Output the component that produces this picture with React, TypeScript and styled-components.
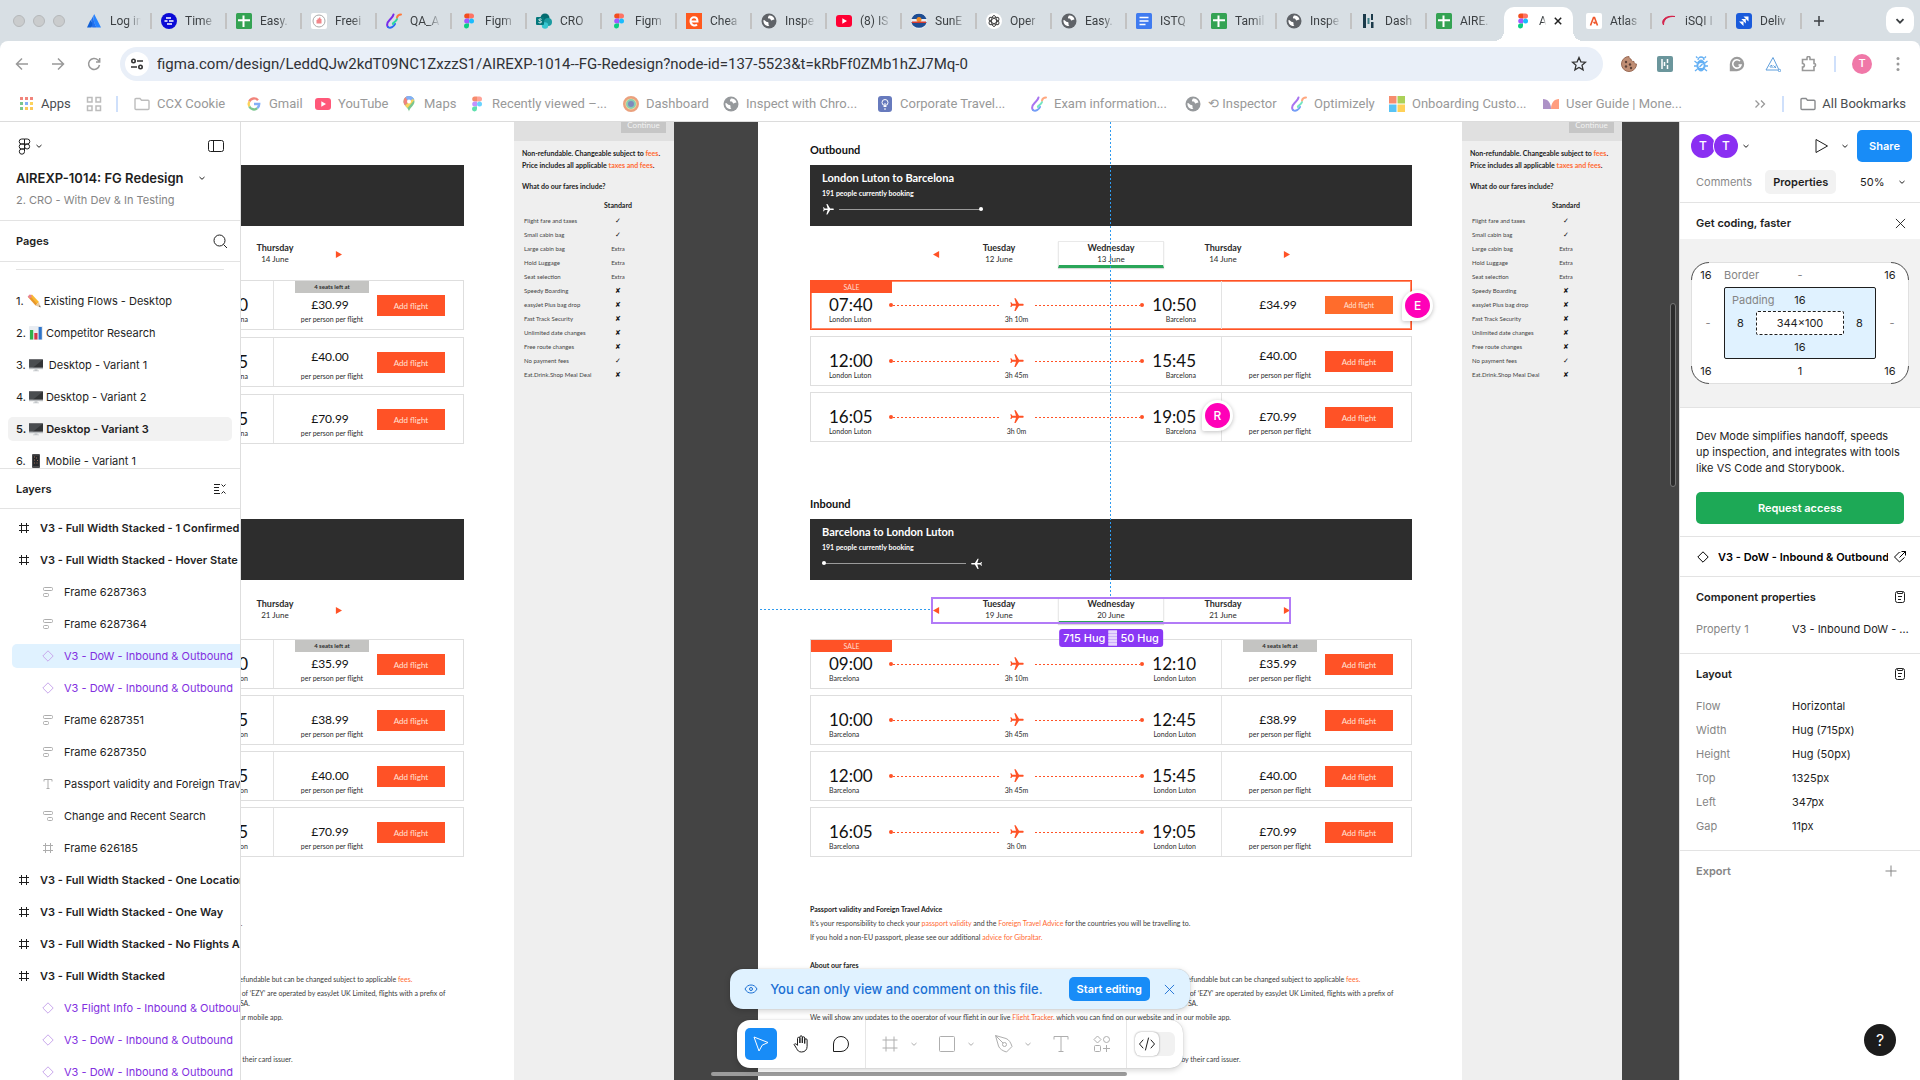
import React from "react";
import styled, { createGlobalStyle, css } from "styled-components";

const UI = `Inter, "Liberation Sans", sans-serif`;
const CHROME = `Roboto, "Liberation Sans", sans-serif`;
const DESIGN = `Lato, "Liberation Sans", sans-serif`;
const ORANGE = "#ff5226";
const LINE = "#e3e3e3";

const GlobalStyle = createGlobalStyle`
  *, *::before, *::after { box-sizing: border-box; }
  body { margin: 0; background: #fff; }
  button, input, select { font: inherit; color: inherit; border: 0; background: none; padding: 0; margin: 0; }
  ul, dl, dd, h1, h2, h3, p { margin: 0; padding: 0; }
  ul { list-style: none; }
  a { color: inherit; text-decoration: none; }
  svg { display: block; flex: none; }
`;

const Window = styled.div`
  display: flex;
  flex-direction: column;
  height: 100vh;
  overflow: hidden;
  font: 400 11px/16px ${UI};
  color: #1e1e1e;
`;

/* ---------- browser chrome ---------- */

const TabStrip = styled.header`
  display: flex;
  flex: none;
  height: 41px;
  padding: 0 6px 0 13px;
  background: #d8dfe4;
  font: 400 12px/16px ${CHROME};
  color: #3c4043;
`;
const Lights = styled.div`
  display: flex;
  align-items: center;
  gap: 8px;
  width: 63px;
`;
const Light = styled.span`
  width: 12px;
  height: 12px;
  border-radius: 50%;
  background: #cacccd;
  border: 1px solid #b5b8ba;
`;
const TabBox = styled.div<{ $active?: boolean; $sep?: boolean }>`
  position: relative;
  display: flex;
  align-items: center;
  width: 75px;
  padding: 0 10px;
  ${(p) =>
    p.$sep &&
    css`
      &::after {
        content: "";
        position: absolute;
        right: -1px;
        top: 13px;
        width: 2px;
        height: 16px;
        background: #c2c2c2;
      }
    `}
  ${(p) =>
    p.$active &&
    css`
      margin: 7px 3px 0;
      width: 69px;
      padding: 0 9px 6px 11px;
      gap: 6px;
      background: #fff;
      border-radius: 10px 10px 0 0;
      &::before {
        content: "";
        position: absolute;
        left: -10px;
        bottom: 0;
        width: 10px;
        height: 10px;
        background: radial-gradient(circle at 0 0, transparent 10px, #fff 10px);
      }
      &::after {
        content: "";
        position: absolute;
        right: -10px;
        bottom: 0;
        width: 10px;
        height: 10px;
        background: radial-gradient(circle at 100% 0, transparent 10px, #fff 10px);
      }
    `}
`;
const TabButton = styled.button`
  display: flex;
  align-items: center;
  gap: 8px;
  flex: 1;
  min-width: 0;
`;
const TabText = styled.span`
  flex: 1;
  min-width: 0;
  overflow: hidden;
  white-space: nowrap;
  text-align: left;
  mask-image: linear-gradient(90deg, #000 55%, transparent 100%);
`;
const IconButton = styled.button<{ $w?: number; $color?: string }>`
  display: grid;
  place-items: center;
  flex: none;
  width: ${(p) => p.$w ?? 24}px;
  height: 24px;
  color: ${(p) => p.$color ?? "inherit"};
`;
const TabEnd = styled.div`
  display: flex;
  flex: 1;
  align-items: center;
  justify-content: space-between;
  padding-left: 6px;
`;
const TabSearch = styled.button`
  display: grid;
  place-items: center;
  width: 28px;
  height: 28px;
  border-radius: 10px;
  background: #fff;
`;
const Toolbar = styled.div`
  display: flex;
  flex: none;
  align-items: center;
  height: 46px;
  padding: 0 8px 0 10px;
  background: #fff;
  color: #999;
  border-radius: 8px 8px 0 0;
  box-shadow: 0 -8px 0 #d8dfe4;
`;
const NavButtons = styled.div`
  display: flex;
  gap: 12px;
  width: 110px;
`;
const Address = styled.form`
  display: flex;
  flex: 1;
  align-items: center;
  height: 34px;
  padding: 0 12px 0 5px;
  border-radius: 17px;
  background: #e9eff8;
  color: #333;
`;
const SiteInfo = styled.button`
  display: grid;
  place-items: center;
  width: 24px;
  height: 24px;
  border-radius: 50%;
  background: #fff;
`;
const AddressInput = styled.input`
  flex: 1;
  min-width: 0;
  padding: 0 8px;
  font: 400 15px/20px ${CHROME};
  color: #303236;
  outline: none;
`;
const Extensions = styled.div`
  display: flex;
  align-items: center;
  gap: 12px;
  padding-left: 14px;
`;
const VBar = styled.span<{ $m?: string }>`
  width: 2px;
  height: 16px;
  margin: ${(p) => p.$m ?? "0"};
  background: #cfe0fb;
`;
const Profile = styled.button`
  width: 20px;
  height: 20px;
  border-radius: 50%;
  background: #f078a8;
  color: #fff;
  font: 500 11px/20px ${CHROME};
  text-align: center;
`;
const Bookmarks = styled.nav`
  display: flex;
  flex: none;
  align-items: center;
  height: 35px;
  padding: 0 14px 0 19px;
  border-bottom: 1px solid #dcdcdc;
  font: 400 13px/16px ${CHROME};
  color: #999;
`;
const Bookmark = styled.a<{ $w?: number; $dark?: boolean }>`
  display: flex;
  align-items: center;
  gap: ${(p) => (p.$dark ? 6 : 7)}px;
  width: ${(p) => (p.$w ? p.$w + "px" : "auto")};
  flex: none;
  white-space: nowrap;
  color: ${(p) => (p.$dark ? "#4a4d51" : "inherit")};
  svg { opacity: 0.65; }
`;
const Spacer = styled.span`
  flex: 1;
`;

/* ---------- figma shell ---------- */

const Shell = styled.div`
  display: flex;
  flex: 1;
  min-height: 0;
`;
const Side = styled.aside<{ $left?: boolean }>`
  display: flex;
  flex-direction: column;
  flex: none;
  width: 241px;
  background: #fff;
  overflow: hidden;
  position: relative;
  border-${(p) => (p.$left ? "right" : "left")}: 1px solid #dedede;
`;
const FileHead = styled.div`
  flex: none;
  padding: 12px 16px;
  border-bottom: 1px solid ${LINE};
`;
const Row = styled.div<{ $gap?: number; $between?: boolean }>`
  display: flex;
  align-items: center;
  gap: ${(p) => p.$gap ?? 0}px;
  justify-content: ${(p) => (p.$between ? "space-between" : "flex-start")};
`;
const LogoButton = styled.button`
  display: flex;
  align-items: center;
  gap: 2px;
  height: 24px;
`;
const FileName = styled.button`
  display: flex;
  align-items: center;
  gap: 14px;
  margin-top: 10px;
  font: 600 13px/20px ${UI};
`;
const Project = styled.p`
  margin-top: 4px;
  color: #858585;
`;
const SectionHead = styled.div<{ $h: number }>`
  display: flex;
  flex: none;
  align-items: center;
  justify-content: space-between;
  height: ${(p) => p.$h}px;
  padding: 0 8px 0 16px;
  border-bottom: 1px solid ${LINE};
  font-weight: 600;
`;
const PageList = styled.ul`
  display: flex;
  flex-direction: column;
  gap: 8px;
  flex: none;
  height: 207px;
  padding: 7px 8px 0;
  overflow: hidden;
  border-bottom: 1px solid ${LINE};
`;
const PageRule = styled.li`
  flex: none;
  height: 1px;
  margin: 0 8px 11px;
  background: ${LINE};
`;
const PageItem = styled.button<{ $on?: boolean }>`
  display: flex;
  align-items: center;
  gap: 3px;
  width: 100%;
  height: 24px;
  padding: 0 8px;
  border-radius: 5px;
  white-space: pre;
  background: ${(p) => (p.$on ? "#f2f2f2" : "none")};
  font-weight: ${(p) => (p.$on ? 600 : 400)};
`;
const LayerList = styled.ul`
  display: flex;
  flex-direction: column;
  gap: 8px;
  flex: 1;
  min-height: 0;
  overflow: hidden;
  padding: 7px 0 0 12px;
`;
const Layer = styled.button<{ $nested?: boolean; $component?: boolean; $on?: boolean }>`
  display: flex;
  align-items: center;
  gap: 10px;
  width: 100%;
  height: 24px;
  padding-left: ${(p) => (p.$nested ? 30 : 6)}px;
  border-radius: 5px 0 0 5px;
  white-space: nowrap;
  overflow: hidden;
  font-weight: ${(p) => (p.$nested ? 400 : 600)};
  color: ${(p) => (p.$component ? "#8230df" : "#1e1e1e")};
  background: ${(p) => (p.$on ? "#e0f2ff" : "none")};
  svg { color: ${(p) => (p.$component ? "#c9a8ec" : p.$nested ? "#adadad" : "#1e1e1e")}; }
`;

/* ---------- canvas ---------- */

const Canvas = styled.main`
  position: relative;
  display: flex;
  gap: 84px;
  flex: 1;
  min-width: 0;
  overflow: hidden;
  background: #444;
`;
const Board = styled.article`
  position: relative;
  display: flex;
  flex: none;
  width: 864px;
  background: #fff;
  font-family: ${DESIGN};
  color: #2b2b2b;
`;
const Journey = styled.div`
  flex: 1;
  padding: 20px 50px 0 52px;
`;
const Leg = styled.section`
  min-height: 354px;
`;
const LegTitle = styled.h2`
  font: 700 11px/16px ${DESIGN};
  color: #111;
`;
const Banner = styled.div`
  height: 61px;
  margin-top: 7px;
  padding: 6px 12px;
  background: #2d2d2d;
  color: #fff;
`;
const BannerTitle = styled.h3`
  font: 700 11px/14px ${DESIGN};
`;
const BannerNote = styled.p`
  margin-top: 3px;
  font: 700 7px/10px ${DESIGN};
`;
const Progress = styled.div<{ $back?: boolean }>`
  display: flex;
  flex-direction: ${(p) => (p.$back ? "row-reverse" : "row")};
  align-items: center;
  width: 161px;
  height: 10px;
  margin-top: 6px;
  gap: 4px;
  svg { transform: rotate(${(p) => (p.$back ? -90 : 90)}deg); }
`;
const ProgressLine = styled.span<{ $back?: boolean }>`
  display: flex;
  align-items: center;
  justify-content: ${(p) => (p.$back ? "flex-start" : "flex-end")};
  flex: 1;
  height: 1px;
  background: #9a9a9a;
`;
const Dot = styled.span<{ $c: string }>`
  flex: none;
  width: 4px;
  height: 4px;
  border-radius: 50%;
  background: ${(p) => p.$c};
`;
const Week = styled.div<{ $late?: boolean }>`
  position: relative;
  display: flex;
  align-items: center;
  gap: 6px;
  width: 358px;
  height: 27px;
  margin: ${(p) => (p.$late ? "17px auto 15px" : "15px auto 12px")};
`;
const Arrow = styled.button<{ $next?: boolean }>`
  width: 8px;
  display: flex;
  justify-content: center;
  color: ${ORANGE};
  svg { transform: ${(p) => (p.$next ? "none" : "scaleX(-1)")}; }
`;
const Day = styled.button<{ $on?: boolean }>`
  width: 106px;
  height: 27px;
  border: 1px solid ${(p) => (p.$on ? "#e9e9e9" : "transparent")};
  border-bottom: 3px solid ${(p) => (p.$on ? "#2aa659" : "transparent")};
  box-shadow: ${(p) => (p.$on ? "0 1px 1px rgba(0,0,0,.15)" : "none")};
  font: 400 8px/11px ${DESIGN};
  text-align: center;
`;
const DayName = styled.strong`
  display: block;
  font: 700 9px/12px ${DESIGN};
`;
const Selection = styled.span`
  position: absolute;
  inset: 0 -1px;
  border: 2px solid #b27bf7;
  pointer-events: none;
`;
const SizeBadge = styled.span`
  position: absolute;
  top: 32px;
  left: 50%;
  z-index: 2;
  display: flex;
  align-items: center;
  gap: 3px;
  height: 18px;
  padding: 0 4px;
  transform: translateX(-50%);
  border-radius: 3px;
  background: #8a38f5;
  color: #fff;
  font: 500 11px/18px ${UI};
  white-space: nowrap;
`;
const Cards = styled.ul<{ $gap: number }>`
  display: flex;
  flex-direction: column;
  gap: ${(p) => p.$gap}px;
`;
const Card = styled.li<{ $hot?: boolean }>`
  display: flex;
  height: 50px;
  border: 1px solid #dedede;
  ${(p) => p.$hot && css`
    border-color: ${ORANGE};
    box-shadow: inset 0 0 0 1px #ff8a66;
  `}
`;
const Flight = styled.div`
  flex: 1;
  border-right: 1px solid #e3e3e3;
`;
const Slot = styled.div<{ $h: number }>`
  height: ${(p) => p.$h}px;
`;
const Tag = styled.span<{ $sale?: boolean }>`
  display: block;
  width: ${(p) => (p.$sale ? 81 : 74)}px;
  height: 12px;
  background: ${(p) => (p.$sale ? ORANGE : "#c4c4c2")};
  color: ${(p) => (p.$sale ? "#ffd9cc" : "#2b2b2b")};
  font: ${(p) => (p.$sale ? 400 : 700)} ${(p) => (p.$sale ? 7 : 6)}px/12px ${DESIGN};
  text-align: center;
`;
const Times = styled.div`
  display: flex;
  padding: 0 25px 0 18px;
`;
const Stop = styled.div<{ $end?: boolean }>`
  width: ${(p) => (p.$end ? 52 : 60)}px;
  text-align: ${(p) => (p.$end ? "right" : "left")};
`;
const Clock = styled.div`
  font: 400 17px/20px ${DESIGN};
  color: #111;
`;
const Small = styled.div<{ $lh?: number }>`
  font: 400 7px/${(p) => p.$lh ?? 8}px ${DESIGN};
  white-space: nowrap;
`;
const Route = styled.div`
  flex: 1;
  text-align: center;
`;
const RouteLine = styled.div`
  display: flex;
  align-items: center;
  height: 20px;
  color: ${ORANGE};
  svg { margin: 0 10px; transform: rotate(90deg); }
`;
const Dashes = styled.span`
  flex: 1;
  height: 1px;
  background: repeating-linear-gradient(90deg, ${ORANGE} 0 2px, transparent 2px 4px);
`;
const Fare = styled.div`
  display: flex;
  width: 189px;
  padding: 0 18px 0 17px;
`;
const FareText = styled.div`
  width: 82px;
  display: flex;
  flex-direction: column;
  align-items: center;
`;
const Price = styled.div`
  font: 400 12px/20px ${DESIGN};
  color: #111;
  padding-right: 4px;
`;
const Add = styled.button<{ $soft?: boolean }>`
  width: 68px;
  height: ${(p) => (p.$soft ? 18 : 21)}px;
  margin: ${(p) => (p.$soft ? 15 : 14)}px 0 0 auto;
  background: ${(p) => (p.$soft ? "#ff6c2c" : ORANGE)};
  color: #ffe3d8;
  font: 400 ${(p) => (p.$soft ? 7 : 8)}px/16px ${DESIGN};
`;
const Notes = styled.div`
  padding-top: 47px;
  white-space: nowrap;
  font: 400 7px/10px ${DESIGN};
  color: #3b3b3b;
  p { margin-bottom: 4px; }
`;
const NoteTitle = styled.h3<{ $top?: number }>`
  margin: ${(p) => p.$top ?? 0}px 0 4px;
  font: 700 7px/10px ${DESIGN};
  color: #222;
`;
const Link = styled.a`
  color: #ff6a33;
`;
const Basket = styled.aside`
  flex: none;
  width: 160px;
  background: #efefef;
`;
const BasketHead = styled.div`
  display: flex;
  justify-content: flex-end;
  align-items: flex-end;
  height: 19px;
  padding: 0 8px 8px 0;
  background: #e0e0e0;
`;
const Continue = styled.button`
  flex: none;
  width: 45px;
  height: 16px;
  background: #c6c6c6;
  color: #f3f3f3;
  font: 400 8px/16px ${DESIGN};
`;
const BasketBody = styled.div`
  padding: 6px 8px;
  font: 700 7px/12px ${DESIGN};
  color: #222;
  white-space: nowrap;
`;
const Question = styled.h3`
  margin-top: 9px;
  font: 700 7px/13px ${DESIGN};
`;
const Fares = styled.table`
  width: 116px;
  margin-top: 5px;
  border-collapse: collapse;
  font: 400 6px/14px ${DESIGN};
  color: #444;
  th { padding: 0 0 2px; font: 700 7px/14px ${DESIGN}; color: #222; }
  td { padding: 0 0 0 2px; height: 14px; }
  td + td { width: 40px; padding: 0; text-align: center; }
`;
const Mark = styled.span`
  font: 700 7px/12px "DejaVu Sans", sans-serif;
  color: #111;
`;
/* Frame scrolled under the left sidebar: only its right-hand part is on screen. */
const Crop = styled.div`
  display: flex;
  justify-content: flex-end;
  flex: none;
  width: 433px;
  overflow: hidden;
  ${LegTitle}, ${BannerTitle}, ${BannerNote}, ${Progress}, ${NoteTitle}, ${Route}, ${Stop}:first-child,
  ${Flight} ${Tag}, ${Day}:not(:nth-child(4)), ${Arrow}:first-child {
    visibility: hidden;
  }
`;
const GuideV = styled.span`
  position: absolute;
  top: 0;
  left: 352px;
  width: 1px;
  height: 475px;
  background: repeating-linear-gradient(#2f9bee 0 2px, transparent 2px 4px);
`;
const GuideH = styled.span`
  position: absolute;
  top: 487px;
  left: 2px;
  width: 171px;
  height: 1px;
  background: repeating-linear-gradient(90deg, #2f9bee 0 2px, transparent 2px 4px);
`;
const Pin = styled.button<{ $x: number; $y: number }>`
  position: absolute;
  left: ${(p) => p.$x}px;
  top: ${(p) => p.$y}px;
  width: 31px;
  height: 31px;
  padding: 3px;
  border-radius: 16px 16px 16px 2px;
  background: #fff;
  box-shadow: 0 1px 4px rgba(0, 0, 0, 0.25);
`;
const PinFace = styled.span`
  display: block;
  border-radius: 50%;
  background: #ff00b8;
  color: #fff;
  font: 500 12px/25px ${UI};
  text-align: center;
`;
const ScrollV = styled.span`
  position: absolute;
  right: 3px;
  top: 181px;
  width: 6px;
  height: 184px;
  border-radius: 3px;
  background: #2c2c2c;
  border: 1px solid #777;
`;
const ScrollH = styled.span`
  position: absolute;
  left: 470px;
  bottom: 4px;
  width: 416px;
  height: 4px;
  border-radius: 2px;
  background: #9c9c9c;
`;
const Dock = styled.div`
  position: absolute;
  left: 0;
  right: 0;
  bottom: 12px;
  display: flex;
  flex-direction: column;
  align-items: center;
  gap: 11px;
`;
const shadow = `0 0 1px rgba(0,0,0,.3), 0 2px 6px rgba(0,0,0,.18)`;
const Notice = styled.div`
  display: flex;
  align-items: center;
  height: 40px;
  padding: 0 8px 0 14px;
  border-radius: 13px;
  background: #e0f2ff;
  box-shadow: ${shadow};
  color: #1a6fd4;
  font: 500 13px/24px ${UI};
`;
const NoticeText = styled.span`
  margin: 0 26px 0 12px;
`;
const Primary = styled.button`
  height: 24px;
  padding: 0 8px;
  margin-right: 8px;
  border-radius: 5px;
  background: #188cf7;
  color: #fff;
  font: 600 11px/24px ${UI};
`;
const Tools = styled.div`
  display: flex;
  align-items: center;
  height: 48px;
  border-radius: 13px;
  background: #fff;
  box-shadow: ${shadow};
`;
const ToolGroup = styled.div<{ $gap?: number; $dim?: boolean }>`
  display: flex;
  align-items: center;
  height: 48px;
  gap: ${(p) => p.$gap ?? 0}px;
  padding: 0 8px;
  color: ${(p) => (p.$dim ? "#aeaeae" : "#1e1e1e")};
  & + & { border-left: 1px solid #e6e6e6; }
`;
const ToolPair = styled.div`
  display: flex;
`;
const Tool = styled.button<{ $on?: boolean; $w?: number }>`
  display: grid;
  place-items: center;
  width: ${(p) => p.$w ?? 32}px;
  height: 32px;
  border-radius: 5px;
  background: ${(p) => (p.$on ? "#188cf7" : "none")};
  color: ${(p) => (p.$on ? "#fff" : "inherit")};
`;
const DevSwitch = styled.button`
  display: flex;
  width: 40px;
  height: 24px;
  border-radius: 6px;
  background: #f1f1f1;
`;
const DevKnob = styled.span`
  display: grid;
  place-items: center;
  width: 24px;
  height: 24px;
  border-radius: 6px;
  background: #fff;
  box-shadow: 0 0 2px rgba(0, 0, 0, 0.45);
`;

/* ---------- right panel ---------- */

const Top = styled.div`
  display: flex;
  align-items: center;
  height: 48px;
  padding: 0 8px 0 11px;
`;
const Face = styled.span<{ $over?: boolean }>`
  width: 24px;
  height: 24px;
  margin-left: ${(p) => (p.$over ? -1 : 0)}px;
  border-radius: 50%;
  background: #8a2ff2;
  box-shadow: 0 0 0 1px #fff;
  color: #fff;
  font: 500 12px/24px ${UI};
  text-align: center;
`;
const Share = styled.button`
  width: 55px;
  height: 32px;
  border-radius: 5px;
  background: #188cf7;
  color: #fff;
  font: 600 11px/32px ${UI};
`;
const Tabs = styled.div`
  display: flex;
  align-items: center;
  padding: 0 10px 8px 8px;
  border-bottom: 1px solid ${LINE};
`;
const PanelTab = styled.button<{ $on?: boolean }>`
  height: 24px;
  padding: 0 8px;
  margin-right: 5px;
  border-radius: 5px;
  color: ${(p) => (p.$on ? "#1e1e1e" : "#8a8a8a")};
  background: ${(p) => (p.$on ? "#f2f2f2" : "none")};
  font-weight: ${(p) => (p.$on ? 600 : 400)};
`;
const ZoomSelect = styled.select`
  width: 34px;
  margin-left: auto;
  appearance: none;
  outline: none;
`;
const Promo = styled.div`
  display: flex;
  align-items: center;
  justify-content: space-between;
  height: 36px;
  padding: 4px 8px 0 16px;
  font-weight: 600;
`;
const Stage = styled.div`
  padding: 23px 11px;
  background: #f2f2f2;
  border-bottom: 1px solid ${LINE};
`;
const BoxModel = styled.div`
  position: relative;
  display: grid;
  grid-template-columns: 32px 1fr 32px;
  grid-template-rows: 24px 72px 24px;
  place-items: center;
  border: 1px solid #e0e0e0;
  border-radius: 18px;
  background: #fff;
`;
const Corners = styled.svg`
  position: absolute;
  inset: -1px;
`;
const Trio = styled.div`
  display: grid;
  grid-template-columns: 1fr auto 1fr;
  width: 100%;
`;
const Corner = styled.span`
  padding-right: 4px;
`;
const Muted = styled.span`
  color: #858585;
`;
const PadBox = styled.div`
  display: grid;
  grid-template-columns: 31px 1fr 31px;
  grid-template-rows: 23px 24px 23px;
  place-items: center;
  width: 100%;
  height: 72px;
  border: 1px solid #1e1e1e;
  border-radius: 2px;
  background: #e0f2ff;
`;
const PadTop = styled.div`
  grid-column: 1 / -1;
  display: grid;
  grid-template-columns: 1fr auto 1fr;
  width: 100%;
  padding: 0 7px;
`;
const PadBottom = styled.div`
  grid-column: 1 / -1;
`;
const Core = styled.div`
  display: grid;
  place-items: center;
  width: 100%;
  height: 24px;
  border: 1px dashed #1e1e1e;
  border-radius: 2px;
  background: #fff;
`;
const Pitch = styled.div`
  padding: 20px 16px 12px;
  border-bottom: 1px solid ${LINE};
`;
const Request = styled.button`
  width: 100%;
  height: 32px;
  margin-top: 16px;
  border-radius: 5px;
  background: #1da956;
  color: #fff;
  font-weight: 600;
`;
const NodeRow = styled.div`
  display: flex;
  align-items: center;
  height: 40px;
  padding: 0 8px 0 17px;
  border-bottom: 1px solid ${LINE};
  font-weight: 600;
  white-space: nowrap;
  color: #000;
`;
const NodeName = styled.span`
  flex: 1;
  min-width: 0;
  margin-left: 9px;
  overflow: hidden;
`;
const Props = styled.section`
  padding-bottom: 12px;
  border-bottom: 1px solid ${LINE};
`;
const PropsHead = styled.h2<{ $dim?: boolean }>`
  display: flex;
  align-items: center;
  justify-content: space-between;
  height: 40px;
  padding: 0 ${(p) => (p.$dim ? 17 : 8)}px 0 16px;
  font: 600 11px/16px ${UI};
  color: ${(p) => (p.$dim ? "#858585" : "#1e1e1e")};
`;
const Prop = styled.div`
  display: grid;
  grid-template-columns: 96px 1fr;
  align-items: center;
  height: 24px;
  padding: 0 11px 0 16px;
  white-space: nowrap;
  dt { color: #858585; }
  dd { overflow: hidden; text-overflow: ellipsis; }
`;
const Help = styled.button`
  position: absolute;
  right: 24px;
  bottom: 24px;
  width: 32px;
  height: 32px;
  border-radius: 50%;
  background: #1c1c1c;
  color: #fff;
  font: 400 16px/32px ${UI};
`;

/* ---------- drawings ---------- */

type S = { s?: number };
const Svg = ({ s = 16, vb = 16, children, ...r }: any) => (
  <svg width={s} height={s} viewBox={`0 0 ${vb} ${vb}`} fill="none" stroke="currentColor" aria-hidden="true" {...r}>
    {children}
  </svg>
);
const Chevron = ({ s = 8 }: S) => (
  <Svg s={s} vb={8}><path d="M1.500 3 4 5.300 6.500 3" /></Svg>
);
const Cross = ({ s = 12 }: S) => (
  <Svg s={s} vb={12}><path d="M1 1l10 10M11 1 1 11" /></Svg>
);
const Plane = ({ s = 16 }: S) => (
  <Svg s={s} vb={24} stroke="none" fill="currentColor">
    <path d="M21 16v-2l-8-5V3.500c0-.83-.67-1.500-1.500-1.500S10 2.670 10 3.500V9l-8 5v2l8-2.500V19l-2 1.500V22l3.500-1 3.500 1v-1.500L13 19v-5.500l8 2.500z" />
  </Svg>
);
const Clipboard = () => (
  <Svg><rect x="3.500" y="2.500" width="9" height="11" rx="2" /><path d="M5.500 4.500v-1a1 1 0 0 1 1-1h3a1 1 0 0 1 1 1v1zM6 7.500h4M6 10.500h3" /></Svg>
);
const Diamond = ({ s = 12 }: S) => (
  <Svg s={s} vb={12}><path d="M6 .8 11.200 6 6 11.200 .8 6z" /></Svg>
);
const LayerIcon = ({ k }: { k: string }) => {
  if (k === "frame") return <Svg s={12} vb={12}><path d="M3.500 1v10M8.500 1v10M1 3.500h10M1 8.500h10" /></Svg>;
  if (k === "text") return <Svg s={12} vb={12}><path d="M2 3.500v-2h8v2M6 1.500v9M4.500 10.500h3" /></Svg>;
  if (k === "auto") return <Svg s={12} vb={12}><rect x="1.500" y="1.500" width="9" height="3" rx="1" /><rect x="1.500" y="7.500" width="5" height="3" rx="1" /></Svg>;
  if (k === "autoR") return <Svg s={12} vb={12}><rect x="1.500" y="1.500" width="9" height="3" rx="1" /><rect x="5.500" y="7.500" width="5" height="3" rx="1" /></Svg>;
  return <Diamond />;
};
const Emoji = ({ k }: { k: string }) => (
  <svg width="14" height="14" viewBox="0 0 14 14" aria-hidden="true">
    {k === "pencil" && (<g>
      <path d="M3 1.500 5 .5l7 7.500-3 3z" fill="#f9b731" /><path d="M3 1.500 1 3l7.500 8.500L10 10z" fill="#e8962a" />
      <path d="M.6 2.500 3 .3l2 2L2.700 4.500z" fill="#e98593" /><path d="m8.400 11.500 3.600-3.400 1.500 5.400z" fill="#e8c9a0" /><path d="m12 12 1.500 1.500-.4-2z" fill="#333" />
    </g>)}
    {k === "chart" && (<g>
      <rect width="14" height="14" rx="1" fill="#e9edf2" /><rect x="1" y="4" width="3.200" height="9.500" fill="#30b24a" />
      <rect x="5.300" y="7" width="3.200" height="6.500" fill="#d4374a" /><rect x="9.600" y="1" width="3.200" height="12.500" fill="#2f74c9" />
    </g>)}
    {k === "screen" && (<g>
      <rect x="0" y="1.500" width="14" height="9" fill="#333537" /><path d="M0 1.500h14L3 10.500H0z" fill="#4a4d50" />
      <rect x="0" y="9.600" width="14" height="1.600" fill="#b9bcbf" /><path d="M5.500 11.200h3v1.300h1.500v.8H4v-.8h1.500z" fill="#c4c7ca" />
    </g>)}
    {k === "phone" && (<g>
      <rect x="3" y="0" width="8" height="14" rx="1" fill="#4a4a4c" /><rect x="4" y="1.500" width="6" height="10.500" fill="#26282b" />
      <path d="M5 3h1M7 4h1M5 6h1M8 6.500h1M5 9h1M7.500 9h1" stroke="#9a6f5a" />
    </g>)}
  </svg>
);
const FigmaMark = () => (
  <g stroke="none">
    <path d="M5.700.5H8v5H5.700a2.500 2.500 0 0 1 0-5z" fill="#f24e1e" /><path d="M8 .5h2.500a2.500 2.500 0 0 1 0 5H8z" fill="#ff7262" />
    <path d="M5.700 5.500H8v5H5.700a2.500 2.500 0 0 1 0-5z" fill="#a259ff" /><circle cx="10.500" cy="8" r="2.500" fill="#1abcfe" />
    <path d="M5.700 10.500H8V13a2.500 2.500 0 1 1-2.300-2.500z" fill="#0acf83" />
  </g>
);
const Fav = ({ k }: { k: string }) => (
  <Svg>
    {k === "figma" && <FigmaMark />}
    {k === "atlassian" && <g stroke="none"><path d="M8.200 1 15 14.500h-4.500C8.500 11 6.500 6 8.200 1z" fill="#2684ff" /><path d="M8 1.500C6.800 5.500 8 9 10.500 14.500H6.200C5.500 12 6.500 9.500 5 7z" fill="#2272ef" /><path d="M4.500 7c2 2 2.500 5 1 7.500H1z" fill="#0f5fd6" /></g>}
    {k === "time" && <g><circle cx="8" cy="8" r="8" fill="#0a0ad6" stroke="none" /><path d="M5 5h5M3.500 8h3M8 8h4.500M6 11h5" stroke="#fff" strokeWidth="1.500" /></g>}
    {k === "sheet" && <g stroke="none"><rect width="16" height="16" rx="1.500" fill="#34a353" /><path d="M6.500 2.500h2v3.800H14v2H8.500V14h-2V8.300H2v-2h4.500z" fill="#fff" /></g>}
    {k === "freei" && <g><rect width="16" height="16" rx="2" fill="#fff" stroke="none" /><circle cx="8" cy="8" r="6" stroke="#aaa" /><path d="M5.500 10.500V7h1V5.500h1.500V4.500h1.500V6h1v4.500z" fill="#f2868a" stroke="none" /></g>}
    {k === "opt" && <g strokeWidth="2" strokeLinecap="round"><path d="M7.500 1.500C7 4 5.500 5 4 6.500c-2.500 2.500-4 5-2 7.500" stroke="#7a2be8" /><path d="M2 14c2.500 2 6-.5 7-3" stroke="#2b6bf3" /><path d="M7 11c-1-1 3-1.500 4-5" stroke="#2bd9a0" /><path d="M11 4.500c.5-2 2-3 4-3" stroke="#ff7a3c" /></g>}
    {k === "cro" && <g stroke="none"><circle cx="9" cy="5" r="4.500" fill="#036c70" /><circle cx="12" cy="9" r="4" fill="#1a9ba1" /><circle cx="9" cy="12.500" r="3.200" fill="#37c6d0" /><rect y="4" width="8" height="8" rx="1" fill="#04787c" /><path d="M5.500 6.300c-1.500-.8-3-.2-2.500.9.400.8 2.500.5 2.500 1.700 0 1-1.800 1.200-3 .5" stroke="#fff" fill="none" /></g>}
    {k === "e" && <g><rect width="16" height="16" fill="#ff5a1f" stroke="none" /><path d="M4.500 8.500h7C11.500 2.500 4.500 3 4.500 8c0 5 5 5 6.500 3.500" stroke="#fff" strokeWidth="2" /></g>}
    {k === "globe" && <g stroke="none"><circle cx="8" cy="8" r="7.500" fill="#5f6368" /><path d="M2.500 7c2 0 2 2 4 2s0 3 2 4c-4 .5-6.500-2.500-6-6zM8 2.500c2-.5 5 1 5.500 4-2 0-2 1-3 1s-.5-2-2.500-2S7.500 3 8 2.500z" fill="#fff" /></g>}
    {k === "yt" && <g stroke="none"><rect y="2" width="16" height="12" rx="3" fill="#ff0033" /><path d="M6.300 5.300 11 8l-4.700 2.700z" fill="#fff" /></g>}
    {k === "sun" && <g stroke="none"><circle cx="8" cy="8" r="8" fill="#e8edf4" /><path d="M.5 6a8 8 0 0 1 15 0z" fill="#1e4d92" /><circle cx="8" cy="6.500" r="2.500" fill="#f08a24" /><path d="M.3 9h15.400a8 8 0 0 1-15.400 0z" fill="#1e4d92" /><path d="M1 8.500h14v1.500H1z" fill="#d63b2f" /></g>}
    {k === "openai" && <g><circle cx="8" cy="8" r="8" fill="#fff" stroke="none" /><g stroke="#444"><ellipse cx="8" cy="8" rx="2.500" ry="5.500" /><ellipse cx="8" cy="8" rx="2.500" ry="5.500" transform="rotate(60 8 8)" /><ellipse cx="8" cy="8" rx="2.500" ry="5.500" transform="rotate(120 8 8)" /></g></g>}
    {k === "doc" && <g><rect x="0" width="16" height="16" rx="1.500" fill="#3f7bf0" stroke="none" /><path d="M3.500 4.500h9M3.500 8h9M3.500 11.500h6" stroke="#fff" strokeWidth="1.500" /></g>}
    {k === "dash" && <g stroke="none" fill="#1b3a4a"><rect x="2" y="1" width="3" height="14" /><rect x="6.500" y="5" width="2" height="6" fill="#3f7f86" /><rect x="10" y="1" width="2" height="6" /><rect x="10" y="9" width="2.500" height="6" /></g>}
    {k === "atlas" && <g><rect width="16" height="16" rx="2" fill="#fff" stroke="none" /><path d="M4.500 12.500 7.500 4.500h1L11.500 12.500M7.500 9l2 1.500" stroke="#f0562a" strokeWidth="1.600" /></g>}
    {k === "isqi" && <path d="M2.500 12C-.5 7 5 2 14 3.500 7 3 2.500 6 2.500 12z" fill="#d4214a" stroke="#d4214a" />}
    {k === "jira" && <g><rect width="16" height="16" rx="3" fill="#1a5bdb" stroke="none" /><path d="M7.500 3.500h5v5zM5.300 6h4.500v4.500zM3 8.500h4.500V13z" fill="#fff" stroke="none" /></g>}
    {k === "apps" && <g stroke="none">{["#ea4335", "#ea4335", "#ea4335", "#34a853", "#4285f4", "#fbbc04", "#34a853", "#f9ab00", "#f9ab00"].map((c, i) => <rect key={i} x={(i % 3) * 5 + 1} y={Math.floor(i / 3) * 5 + 1} width="3" height="3" fill={c} />)}</g>}
    {k === "grid" && <g strokeWidth="1.500"><rect x="1.500" y="1.500" width="4.500" height="4.500" /><rect x="10" y="1.500" width="4.500" height="4.500" /><rect x="1.500" y="10" width="4.500" height="4.500" /><rect x="10" y="10" width="4.500" height="4.500" /></g>}
    {k === "folder" && <path d="M1 3.500a1 1 0 0 1 1-1h4l1.500 1.700H14a1 1 0 0 1 1 1v7.300a1 1 0 0 1-1 1H2a1 1 0 0 1-1-1z" strokeWidth="1.400" />}
    {k === "google" && <g strokeWidth="2.400"><path d="M12 4.200A5.200 5.200 0 0 0 3.300 5.500" stroke="#ea4335" /><path d="M3.300 5.500a5.300 5.300 0 0 0 0 5" stroke="#fbbc04" /><path d="M3.300 10.500a5.200 5.200 0 0 0 8 1.700" stroke="#34a853" /><path d="M8 8h5.200c0 1.700-.7 3.200-1.900 4.200" stroke="#4285f4" /></g>}
    {k === "maps" && <g stroke="none"><path d="M8 15.500C7.500 12 2.500 9.500 2.500 5.500a5.500 5.500 0 0 1 11 0c0 4-5 6.500-5.500 10z" fill="#34a853" /><path d="M2.500 5.500A5.500 5.500 0 0 1 8 0v5.500L4 9.500c-1-1.200-1.500-2.500-1.500-4z" fill="#ea4335" /><path d="M8 0a5.500 5.500 0 0 1 5.300 4L8 6.500 4.500 1.300A5 5 0 0 1 8 0z" fill="#4285f4" /><path d="M4 9.500 11.500 3l1.800 1L6.500 12z" fill="#fbbc04" /><circle cx="8" cy="5.500" r="2" fill="#fff" /></g>}
    {k === "dashboard" && <g><circle cx="8" cy="8" r="6.800" stroke="#e0703a" strokeWidth="2.400" fill="#f6d06a" /><circle cx="8" cy="8" r="4" stroke="#4bb58c" strokeWidth="2" fill="#3a4d9a" /></g>}
    {k === "corp" && <g><rect x="1" width="14" height="16" rx="3" fill="#16349a" stroke="none" /><circle cx="8" cy="6.500" r="3" stroke="#fff" /><path d="M6.500 10.500h3M7 13h2M8 7v3" stroke="#fff" /></g>}
    {k === "ms" && <g stroke="none"><rect width="7.500" height="7.500" fill="#f25022" /><rect x="8.500" width="7.500" height="7.500" fill="#7fba00" /><rect y="8.500" width="7.500" height="7.500" fill="#00a4ef" /><rect x="8.500" y="8.500" width="7.500" height="7.500" fill="#ffb900" /></g>}
    {k === "guide" && <g stroke="none"><path d="M0 3c5 0 8 4 8 10H0z" fill="#8259a8" /><path d="M16 3c-5 0-8 4-8 10h8z" fill="#ff6a3c" /></g>}
  </Svg>
);

/* ---------- data ---------- */

const TABS: [string, string][] = [
  ["atlassian", "Log in"], ["time", "Time"], ["sheet", "Easy."], ["freei", "Freei"], ["opt", "QA_A"], ["figma", "Figm"],
  ["cro", "CRO"], ["figma", "Figm"], ["e", "Chea"], ["globe", "Inspe"], ["yt", "(8) IS"], ["sun", "SunE"], ["openai", "Oper"],
  ["globe", "Easy."], ["doc", "ISTQ"], ["sheet", "Tamil"], ["globe", "Inspe"], ["dash", "Dash"], ["sheet", "AIRE."],
];
const TABS_AFTER: [string, string][] = [["atlas", "Atlas"], ["isqi", "iSQI I"], ["jira", "Deliv"]];
const MARKS: [string, string, number][] = [
  ["folder", "CCX Cookie", 112], ["google", "Gmail", 69], ["yt", "YouTube", 86], ["maps", "Maps", 68],
  ["figma", "Recently viewed –...", 154], ["dashboard", "Dashboard", 100], ["globe", "Inspect with Chro...", 154],
  ["corp", "Corporate Travel...", 154], ["opt", "Exam information...", 154], ["globe", "⟲ Inspector", 106],
  ["opt", "Optimizely", 98], ["ms", "Onboarding Custo...", 154], ["guide", "User Guide | Mone...", 154],
];
const PAGES: [string, string, string][] = [
  ["1.", "pencil", "Existing Flows - Desktop"], ["2.", "chart", "Competitor Research"], ["3.", "screen", " Desktop - Variant 1"],
  ["4.", "screen", "Desktop - Variant 2"], ["5.", "screen", "Desktop - Variant 3"], ["6.", "phone", "Mobile - Variant 1"],
];
const DOW = "V3 - DoW - Inbound & Outbound";
const LAYERS: [string, string, number][] = [
  ["frame", "V3 - Full Width Stacked - 1 Confirmed", 0], ["frame", "V3 - Full Width Stacked - Hover State", 0],
  ["auto", "Frame 6287363", 1], ["auto", "Frame 6287364", 1], ["comp", DOW, 1], ["comp", DOW, 1],
  ["auto", "Frame 6287351", 1], ["auto", "Frame 6287350", 1], ["text", "Passport validity and Foreign Travel", 1],
  ["autoR", "Change and Recent Search", 1], ["frame", "Frame 626185", 1], ["frame", "V3 - Full Width Stacked - One Location", 0],
  ["frame", "V3 - Full Width Stacked - One Way", 0], ["frame", "V3 - Full Width Stacked - No Flights A", 0],
  ["frame", "V3 - Full Width Stacked", 0], ["comp", "V3 Flight Info - Inbound & Outbound", 1], ["comp", DOW, 1], ["comp", DOW, 1],
];
const INCLUDED: [string, string][] = [
  ["Flight fare and taxes", "✓"], ["Small cabin bag", "✓"], ["Large cabin bag", "Extra"], ["Hold Luggage", "Extra"],
  ["Seat selection", "Extra"], ["Speedy Boarding", "✘"], ["easyJet Plus bag drop", "✘"], ["Fast Track Security", "✘"],
  ["Unlimited date changes", "✘"], ["Free route changes", "✘"], ["No payment fees", "✓"], ["Eat.Drink.Shop Meal Deal", "✘"],
];
type FlightRow = { dep: string; arr: string; time: string; price: string; sale?: boolean; seats?: boolean; wide?: boolean; hot?: boolean };
const OUT: FlightRow[] = [
  { dep: "07:40", arr: "10:50", time: "3h 10m", price: "£34.99", sale: true, hot: true },
  { dep: "12:00", arr: "15:45", time: "3h 45m", price: "£40.00", wide: true },
  { dep: "16:05", arr: "19:05", time: "3h 0m", price: "£70.99" },
];
const OUT_PREV: FlightRow[] = [{ ...OUT[0], price: "£30.99", seats: true, hot: false }, OUT[1], OUT[2]];
const BACK: FlightRow[] = [
  { dep: "09:00", arr: "12:10", time: "3h 10m", price: "£35.99", sale: true, seats: true },
  { dep: "10:00", arr: "12:45", time: "3h 45m", price: "£38.99" },
  { dep: "12:00", arr: "15:45", time: "3h 45m", price: "£40.00" },
  { dep: "16:05", arr: "19:05", time: "3h 0m", price: "£70.99" },
];

/* ---------- artboard ---------- */

const FlightCard = ({ f, from, to }: { f: FlightRow; from: string; to: string }) => (
  <Card $hot={f.hot}>
    <Flight>
      <Slot $h={14}>{f.sale && <Tag $sale>SALE</Tag>}</Slot>
      <Times>
        <Stop><Clock>{f.dep}</Clock><Small>{from}</Small></Stop>
        <Route>
          <RouteLine><Dot $c={ORANGE} /><Dashes /><Plane s={16} /><Dashes /><Dot $c={ORANGE} /></RouteLine>
          <Small>{f.time}</Small>
        </Route>
        <Stop $end><Clock>{f.arr}</Clock><Small>{to}</Small></Stop>
      </Times>
    </Flight>
    <Fare>
      <FareText>
        <Slot $h={f.wide ? 9 : 14}>{f.seats && <Tag>4 seats left at</Tag>}</Slot>
        <Price>{f.price}</Price>
        {!f.hot && <Small $lh={f.wide ? 18 : 8}>per person per flight</Small>}
      </FareText>
      <Add $soft={f.hot}>Add flight</Add>
    </Fare>
  </Card>
);

const LegView = ({ title, from, to, back, first, flights, gap, selected }: any) => (
  <Leg>
    <LegTitle>{title}</LegTitle>
    <Banner>
      <BannerTitle>{from} to {to}</BannerTitle>
      <BannerNote>191 people currently booking</BannerNote>
      <Progress $back={back}>
        <Plane s={13} />
        <ProgressLine $back={back}><Dot $c="#fff" /></ProgressLine>
      </Progress>
    </Banner>
    <Week $late={back}>
      <Arrow aria-label="Previous days"><Svg s={7} vb={8} stroke="none" fill="currentColor"><path d="M1 0l7 4-7 4z" /></Svg></Arrow>
      {["Tuesday", "Wednesday", "Thursday"].map((d, i) => (
        <Day key={d} $on={i === 1}><DayName>{d}</DayName>{first + i} June</Day>
      ))}
      <Arrow $next aria-label="Next days"><Svg s={7} vb={8} stroke="none" fill="currentColor"><path d="M1 0l7 4-7 4z" /></Svg></Arrow>
      {selected && <Selection />}
      {selected && (
        <SizeBadge>
          715 Hug
          <svg width="9" height="16" viewBox="0 0 9 16"><rect width="9" height="16" fill="#cdb0fa" /><path d="M0 2h9M0 5h9M0 8h9M0 11h9M0 14h9" stroke="#fff" /></svg>
          50 Hug
        </SizeBadge>
      )}
    </Week>
    <Cards $gap={gap}>
      {flights.map((f: FlightRow) => <FlightCard key={f.dep} f={f} from={from} to={to} />)}
    </Cards>
  </Leg>
);

const BoardView = ({ out, live }: { out: FlightRow[]; live?: boolean }) => (
  <Board>
    <Journey>
      <LegView title="Outbound" from="London Luton" to="Barcelona" first={12} flights={out} gap={live ? 6 : 7} />
      <LegView title="Inbound" from="Barcelona" to="London Luton" first={19} flights={BACK} gap={6} back selected={live} />
      <Notes>
        <NoteTitle>Passport validity and Foreign Travel Advice</NoteTitle>
        <p>It’s your responsibility to check your <Link href="#">passport validity</Link> and the <Link href="#">Foreign Travel Advice</Link> for the countries you will be travelling to.</p>
        <p>If you hold a non-EU passport, please see our additional <Link href="#">advice for Gibraltar.</Link></p>
        <NoteTitle $top={18}>About our fares</NoteTitle>
        <p>Fares shown are per person per flight and include all taxes and charges for each guest on a booking. All our tickets are non-refundable but can be changed subject to applicable <Link href="#">fees.</Link></p>
        <p>Your flight may be operated by any of the easyJet group airlines, which share one brand and the service. Flights with a prefix of ‘EZY’ are operated by easyJet UK Limited, flights with a prefix of<br />‘EJU’ are operated by easyJet Europe Airline GmbH; flights with a prefix of ‘EZS’ or ‘DS’ are operated by easyJet Switzerland SA.</p>
        <p>We will show any updates to the operator of your flight in our live <Link href="#">Flight Tracker,</Link> which you can find on our website and in our mobile app.</p>
        <NoteTitle $top={18}>Payment</NoteTitle>
        <p>If you pay with a card issued outside your own country, please note that customers may also be charged an additional fee by their card issuer.</p>
      </Notes>
    </Journey>
    <Basket>
      <BasketHead><Continue>Continue</Continue></BasketHead>
      <BasketBody>
        <p>Non-refundable. Changeable subject to <Link href="#">fees</Link>.</p>
        <p>Price includes all applicable <Link href="#">taxes and fees</Link>.</p>
        <Question>What do our fares include?</Question>
        <Fares>
          <thead><tr><th /><th>Standard</th></tr></thead>
          <tbody>
            {INCLUDED.map(([a, b]) => (
              <tr key={a}><td>{a}</td><td>{b === "Extra" ? b : <Mark>{b}</Mark>}</td></tr>
            ))}
          </tbody>
        </Fares>
      </BasketBody>
    </Basket>
    {live && <GuideV />}
    {live && <GuideH />}
  </Board>
);

/* ---------- page ---------- */

const Browser = () => (
  <>
    <TabStrip>
      <Lights><Light /><Light /><Light /></Lights>
      {TABS.map(([k, t], i) => (
        <TabBox key={i} $sep={i < TABS.length - 1}><TabButton><Fav k={k} /><TabText>{t}</TabText></TabButton></TabBox>
      ))}
      <TabBox $active>
        <TabButton><Fav k="figma" /><TabText>AI</TabText></TabButton>
        <IconButton $w={12} $color="#222" aria-label="Close tab"><Svg s={8} vb={8} strokeWidth="1.500"><path d="M.8.8l6.400 6.400M7.200.8.8 7.200" /></Svg></IconButton>
      </TabBox>
      {TABS_AFTER.map(([k, t]) => (
        <TabBox key={k} $sep><TabButton><Fav k={k} /><TabText>{t}</TabText></TabButton></TabBox>
      ))}
      <TabEnd>
        <IconButton aria-label="New tab"><Svg s={12} vb={12} strokeWidth="1.500"><path d="M6 1v10M1 6h10" /></Svg></IconButton>
        <TabSearch aria-label="Search tabs"><Svg s={10} vb={10} strokeWidth="1.800"><path d="M1.500 3.200 5 6.700l3.500-3.500" /></Svg></TabSearch>
      </TabEnd>
    </TabStrip>
    <Toolbar>
      <NavButtons>
        <IconButton aria-label="Back"><Svg s={14} vb={14} strokeWidth="1.500"><path d="M13 7H1.500M7 1.500 1.500 7 7 12.500" /></Svg></IconButton>
        <IconButton aria-label="Forward"><Svg s={14} vb={14} strokeWidth="1.500"><path d="M1 7h11.500M7 1.500 12.500 7 7 12.500" /></Svg></IconButton>
        <IconButton aria-label="Reload"><Svg s={14} vb={14} strokeWidth="1.500"><path d="M12.500 8A5.500 5.500 0 1 1 11 3l1.500 1.500M12.700 1v4H9" /></Svg></IconButton>
      </NavButtons>
      <Address>
        <SiteInfo type="button" aria-label="Site information"><Svg s={14} vb={14} strokeWidth="1.600"><circle cx="3.500" cy="4" r="1.700" /><path d="M7 4h6M1 10h6" /><circle cx="10.500" cy="10" r="1.700" /></Svg></SiteInfo>
        <AddressInput aria-label="Address" readOnly value="figma.com/design/LeddQJw2kdT09NC1ZxzzS1/AIREXP-1014--FG-Redesign?node-id=137-5523&t=kRbFf0ZMb1hZJ7Mq-0" />
        <IconButton type="button" aria-label="Bookmark this page"><Svg s={16} vb={16} strokeWidth="1.300"><path d="m8 1.500 1.900 4.300 4.600.4-3.500 3.100 1.100 4.600L8 11.500l-4.100 2.400L5 9.300 1.500 6.200l4.600-.4z" /></Svg></IconButton>
      </Address>
      <Extensions>
        <IconButton aria-label="Cookies"><Svg><path d="M8 .5A7.500 7.500 0 1 0 15.500 8c-2 0-2.500-1-2.500-2.500C11 5.500 10 5 10 3 8.500 3 8 2 8 .5z" fill="#c08e74" stroke="#9a6a55" /><g fill="#5d4238" stroke="none"><circle cx="5" cy="6" r="1.200" /><circle cx="5" cy="10.500" r="1.200" /><circle cx="9" cy="8.500" r="1.200" /><circle cx="10" cy="12" r="1.200" /></g></Svg></IconButton>
        <IconButton aria-label="Dashboard"><Svg><rect width="16" height="16" rx="2" fill="#6b969c" stroke="none" /><path d="M5 3v10M7.500 6v4M10.500 3v4M10.500 9v4" stroke="#fff" strokeWidth="1.500" /></Svg></IconButton>
        <IconButton aria-label="Debugger" $color="#64b0f4"><Svg><ellipse cx="8" cy="9.500" rx="4" ry="5.500" fill="currentColor" /><path d="M5 4a3 3 0 0 1 6 0M4.500 2 3 .5M11.500 2 13 .5M4 7 1.500 5M12 7l2.500-2M4 10H1M12 10h3M4.500 13 2 15M11.500 13l2.500 2" strokeWidth="1.300" /><circle cx="8" cy="9.500" r="2.600" fill="#fff" stroke="none" /><path d="m6.500 11 3-3" strokeWidth="1.500" /></Svg></IconButton>
        <IconButton aria-label="Grammar" $color="#9c9c9c"><Svg><path d="M8 .8A7.200 7.200 0 1 1 8 15.200H.8V8A7.200 7.200 0 0 1 8 .8z" fill="currentColor" stroke="none" /><path d="M11 5A4.200 4.200 0 1 0 12 9H9.500" stroke="#fff" strokeWidth="1.600" /></Svg></IconButton>
        <IconButton aria-label="Accessibility" $color="#5f9fdd"><Svg><path d="M8 1.500 14 14H1z" /><path d="M5.500 11.500c-1-1 0-2.500 1.500-2v2.500M8.500 9.500l2.500 2.500M11 9.500 8.500 12" /><circle cx="14.500" cy="14.500" r="1.200" fill="#fff" /></Svg></IconButton>
        <IconButton aria-label="Extensions"><Svg strokeWidth="1.600"><path d="M1.500 3.500H6V2a1.500 1.500 0 0 1 3 0v1.500h4V7.500a1.500 1.500 0 0 1 0 3.200v3.800H1.500V11c2.500 0 2.500-3.500 0-3.500z" /></Svg></IconButton>
        <VBar $m="0 4px 0 1px" />
        <Profile aria-label="Profile">T</Profile>
        <IconButton aria-label="Menu" $w={28}><Svg stroke="none" fill="currentColor"><circle cx="8" cy="2.500" r="1.500" /><circle cx="8" cy="8" r="1.500" /><circle cx="8" cy="13.500" r="1.500" /></Svg></IconButton>
      </Extensions>
    </Toolbar>
    <Bookmarks>
      <Bookmark href="#" $w={67} $dark><Fav k="apps" />Apps</Bookmark>
      <Bookmark href="#" $w={29} aria-label="Tab groups"><Fav k="grid" /></Bookmark>
      <VBar $m="0 16px 0 1px" />
      {MARKS.map(([k, t, w]) => <Bookmark key={t} href="#" $w={w}><Fav k={k} />{t}</Bookmark>)}
      <Spacer />
      <IconButton aria-label="More bookmarks"><Svg s={12} vb={12}><path d="m1.500 2.500 3.500 3.500-3.500 3.500M7 2.500 10.500 6 7 9.500" strokeWidth="1.300" /></Svg></IconButton>
      <VBar $m="0 16px 0 10px" />
      <Bookmark href="#" $dark><Fav k="folder" />All Bookmarks</Bookmark>
    </Bookmarks>
  </>
);

const LeftPanel = () => (
  <Side $left>
    <FileHead>
      <Row $between>
        <LogoButton aria-label="Main menu">
          <Svg s={17} vb={17}><path d="M5.700 1H8.500v5H5.700a2.500 2.500 0 0 1 0-5zM8.500 1h2.800a2.500 2.500 0 0 1 0 5H8.500zM5.700 6H8.500v5H5.700a2.500 2.500 0 0 1 0-5zM5.700 11H8.500v2.500A2.600 2.600 0 1 1 5.700 11zM11.100 6a2.500 2.500 0 1 1 0 5 2.500 2.500 0 0 1 0-5z" /></Svg>
          <Chevron />
        </LogoButton>
        <IconButton $w={16} aria-label="Toggle panels"><Svg><rect x=".5" y="2.500" width="15" height="11" rx="2" /><path d="M5.500 2.500v11" /></Svg></IconButton>
      </Row>
      <FileName>AIREXP-1014: FG Redesign<Chevron /></FileName>
      <Project>2. CRO - With Dev &amp; In Testing</Project>
    </FileHead>
    <SectionHead $h={41}>Pages<IconButton aria-label="Search pages"><Svg><circle cx="7.500" cy="7.500" r="5.500" /><path d="m11.500 11.500 3.500 3.500" /></Svg></IconButton></SectionHead>
    <PageList>
      <PageRule />
      {PAGES.map(([n, k, t]) => <li key={n}><PageItem $on={n === "5."}>{n}<Emoji k={k} />{t}</PageItem></li>)}
    </PageList>
    <SectionHead $h={40}>Layers<IconButton aria-label="Collapse layers"><Svg><path d="M2 3.500h6M2 6.500h5M2 9.500h5M2 12.500h6M9.500 3.500l2 2 2-2M9.500 12.500l2-2 2 2" /></Svg></IconButton></SectionHead>
    <LayerList>
      {LAYERS.map(([k, t, n], i) => (
        <li key={i}><Layer $nested={!!n} $component={k === "comp"} $on={i === 4}><LayerIcon k={k} />{t}</Layer></li>
      ))}
    </LayerList>
  </Side>
);

const Area = () => (
  <Canvas>
    <Crop><BoardView out={OUT_PREV} /></Crop>
    <BoardView out={OUT} live />
    <Pin $x={1161} $y={168}><PinFace>E</PinFace></Pin>
    <Pin $x={961} $y={278}><PinFace>R</PinFace></Pin>
    <ScrollV />
    <ScrollH />
    <Dock>
      <Notice role="status">
        <Svg s={14} vb={14}><path d="M1 7c1.500-2.800 3.500-4 6-4s4.500 1.200 6 4c-1.500 2.800-3.500 4-6 4S2.500 9.800 1 7z" /><circle cx="7" cy="7" r="1.500" /></Svg>
        <NoticeText>You can only view and comment on this file.</NoticeText>
        <Primary>Start editing</Primary>
        <IconButton aria-label="Dismiss"><Cross s={11} /></IconButton>
      </Notice>
      <Tools>
        <ToolGroup $gap={8}>
          <Tool $on aria-label="Move"><Svg s={18} vb={18}><path d="M2 2l14 5.500-5.800 2.700L7 16z" strokeLinejoin="round" /></Svg></Tool>
          <Tool aria-label="Hand"><Svg s={20} vb={20} strokeLinejoin="round" strokeLinecap="round"><path d="M6.500 11V4.500a1.200 1.200 0 0 1 2.400 0V9 3a1.200 1.200 0 0 1 2.400 0v6-5a1.200 1.200 0 0 1 2.400 0v5.500V6a1.200 1.200 0 0 1 2.400 0v6.500c0 3-2 5.500-5.500 5.500-3 0-4-1.500-5-3.500l-2.500-4c.5-1 1.800-1 2.600 0z" /></Svg></Tool>
          <Tool aria-label="Comment"><Svg s={18} vb={18}><path d="M9 1.500a7.500 7.500 0 0 1 0 15H1.500V9A7.500 7.500 0 0 1 9 1.500z" strokeLinejoin="round" /></Svg></Tool>
        </ToolGroup>
        <ToolGroup $gap={9} $dim>
          <ToolPair>
            <Tool aria-label="Frame"><Svg s={18} vb={18}><path d="M5 1.500v15M13 1.500v15M1.500 5h15M1.500 13h15" /></Svg></Tool>
            <Tool $w={16} aria-label="Frame options"><Chevron /></Tool>
          </ToolPair>
          <ToolPair>
            <Tool aria-label="Rectangle"><Svg s={18} vb={18}><rect x="1.500" y="1.500" width="15" height="15" rx="1" /></Svg></Tool>
            <Tool $w={16} aria-label="Shape options"><Chevron /></Tool>
          </ToolPair>
          <ToolPair>
            <Tool aria-label="Pen"><Svg s={20} vb={20} strokeLinejoin="round"><path d="M1.500 1.500 12 4.500c3 1 5 4.500 6 8l-5.500 5.500c-3.500-1-7-3-8-6zM1.500 1.500l7.500 7.500" /><circle cx="10.500" cy="10.500" r="2" /></Svg></Tool>
            <Tool $w={16} aria-label="Pen options"><Chevron /></Tool>
          </ToolPair>
          <Tool aria-label="Text"><Svg s={18} vb={18}><path d="M2 4.500v-3h14v3M9 1.500v15M6.500 16.500h5" /></Svg></Tool>
          <Tool aria-label="Components"><Svg s={18} vb={18}><path d="M4.500 1 8 4.500 4.500 8 1 4.500z" /><circle cx="13.500" cy="4.500" r="3" /><rect x="1.500" y="10.500" width="6" height="6" rx="1" /><path d="M13.500 10v7M10 13.500h7" /></Svg></Tool>
        </ToolGroup>
        <ToolGroup>
          <DevSwitch role="switch" aria-checked="false" aria-label="Dev Mode"><DevKnob><Svg s={18} vb={18} strokeLinecap="round"><path d="M5 5 1.500 9 5 13M13 5l3.500 4-3.500 4M10.500 3l-3 12" /></Svg></DevKnob></DevSwitch>
        </ToolGroup>
      </Tools>
    </Dock>
  </Canvas>
);

const RightPanel = () => (
  <Side>
    <Top>
      <Face>T</Face><Face $over>T</Face>
      <IconButton $w={16} aria-label="Collaborators"><Chevron /></IconButton>
      <Spacer />
      <IconButton aria-label="Present"><Svg><path d="M3 1.500 14.500 8 3 14.500z" strokeLinejoin="round" /></Svg></IconButton>
      <IconButton aria-label="Present options"><Chevron /></IconButton>
      <Share>Share</Share>
    </Top>
    <Tabs>
      <PanelTab>Comments</PanelTab>
      <PanelTab $on>Properties</PanelTab>
      <ZoomSelect aria-label="Zoom"><option>50%</option></ZoomSelect>
      <IconButton $w={16} aria-label="Zoom options"><Chevron /></IconButton>
    </Tabs>
    <Promo>Get coding, faster<IconButton aria-label="Close"><Cross s={11} /></IconButton></Promo>
    <Stage>
      <BoxModel>
        <Corners width="218" height="122" viewBox="0 0 218 122" fill="none" stroke="#555">
          <path d="M.5 18A17.500 17.500 0 0 1 18 .5M200 .5A17.500 17.500 0 0 1 217.500 18M217.500 104A17.500 17.500 0 0 1 200 121.500M18 121.500A17.500 17.500 0 0 1 .5 104" />
        </Corners>
        <Corner>16</Corner><Trio><Muted>Border</Muted><Muted>-</Muted><span /></Trio><Corner>16</Corner>
        <Muted>-</Muted>
        <PadBox>
          <PadTop><Muted>Padding</Muted>16<span /></PadTop>
          <span>8</span><Core>344×100</Core><span>8</span>
          <PadBottom>16</PadBottom>
        </PadBox>
        <Muted>-</Muted>
        <Corner>16</Corner><span>1</span><Corner>16</Corner>
      </BoxModel>
    </Stage>
    <Pitch>
      <p>Dev Mode simplifies handoff, speeds up inspection, and integrates with tools like VS Code and Storybook.</p>
      <Request>Request access</Request>
    </Pitch>
    <NodeRow>
      <Diamond /><NodeName>V3 - DoW - Inbound &amp; Outbound</NodeName>
      <IconButton aria-label="Go to main component"><Svg s={14} vb={14}><path d="M7 2.500 6.500 2 1.500 7 6.500 12 11.500 7.500M6.500 7.500 12.500 1.500M8.500 1.500h4v4" /></Svg></IconButton>
    </NodeRow>
    <Props>
      <PropsHead>Component properties<IconButton aria-label="Copy properties"><Clipboard /></IconButton></PropsHead>
      <dl><Prop><dt>Property 1</dt><dd>V3 - Inbound DoW - Default</dd></Prop></dl>
    </Props>
    <Props>
      <PropsHead>Layout<IconButton aria-label="Copy layout"><Clipboard /></IconButton></PropsHead>
      <dl>
        {[["Flow", "Horizontal"], ["Width", "Hug (715px)"], ["Height", "Hug (50px)"], ["Top", "1325px"], ["Left", "347px"], ["Gap", "11px"]].map(([a, b]) => (
          <Prop key={a}><dt>{a}</dt><dd>{b}</dd></Prop>
        ))}
      </dl>
    </Props>
    <PropsHead $dim>Export<IconButton aria-label="Add export"><Svg s={12} vb={12}><path d="M6 .5v11M.5 6h11" /></Svg></IconButton></PropsHead>
    <Help aria-label="Help">?</Help>
  </Side>
);

export default function App() {
  return (
    <Window>
      <GlobalStyle />
      <Browser />
      <Shell>
        <LeftPanel />
        <Area />
        <RightPanel />
      </Shell>
    </Window>
  );
}
